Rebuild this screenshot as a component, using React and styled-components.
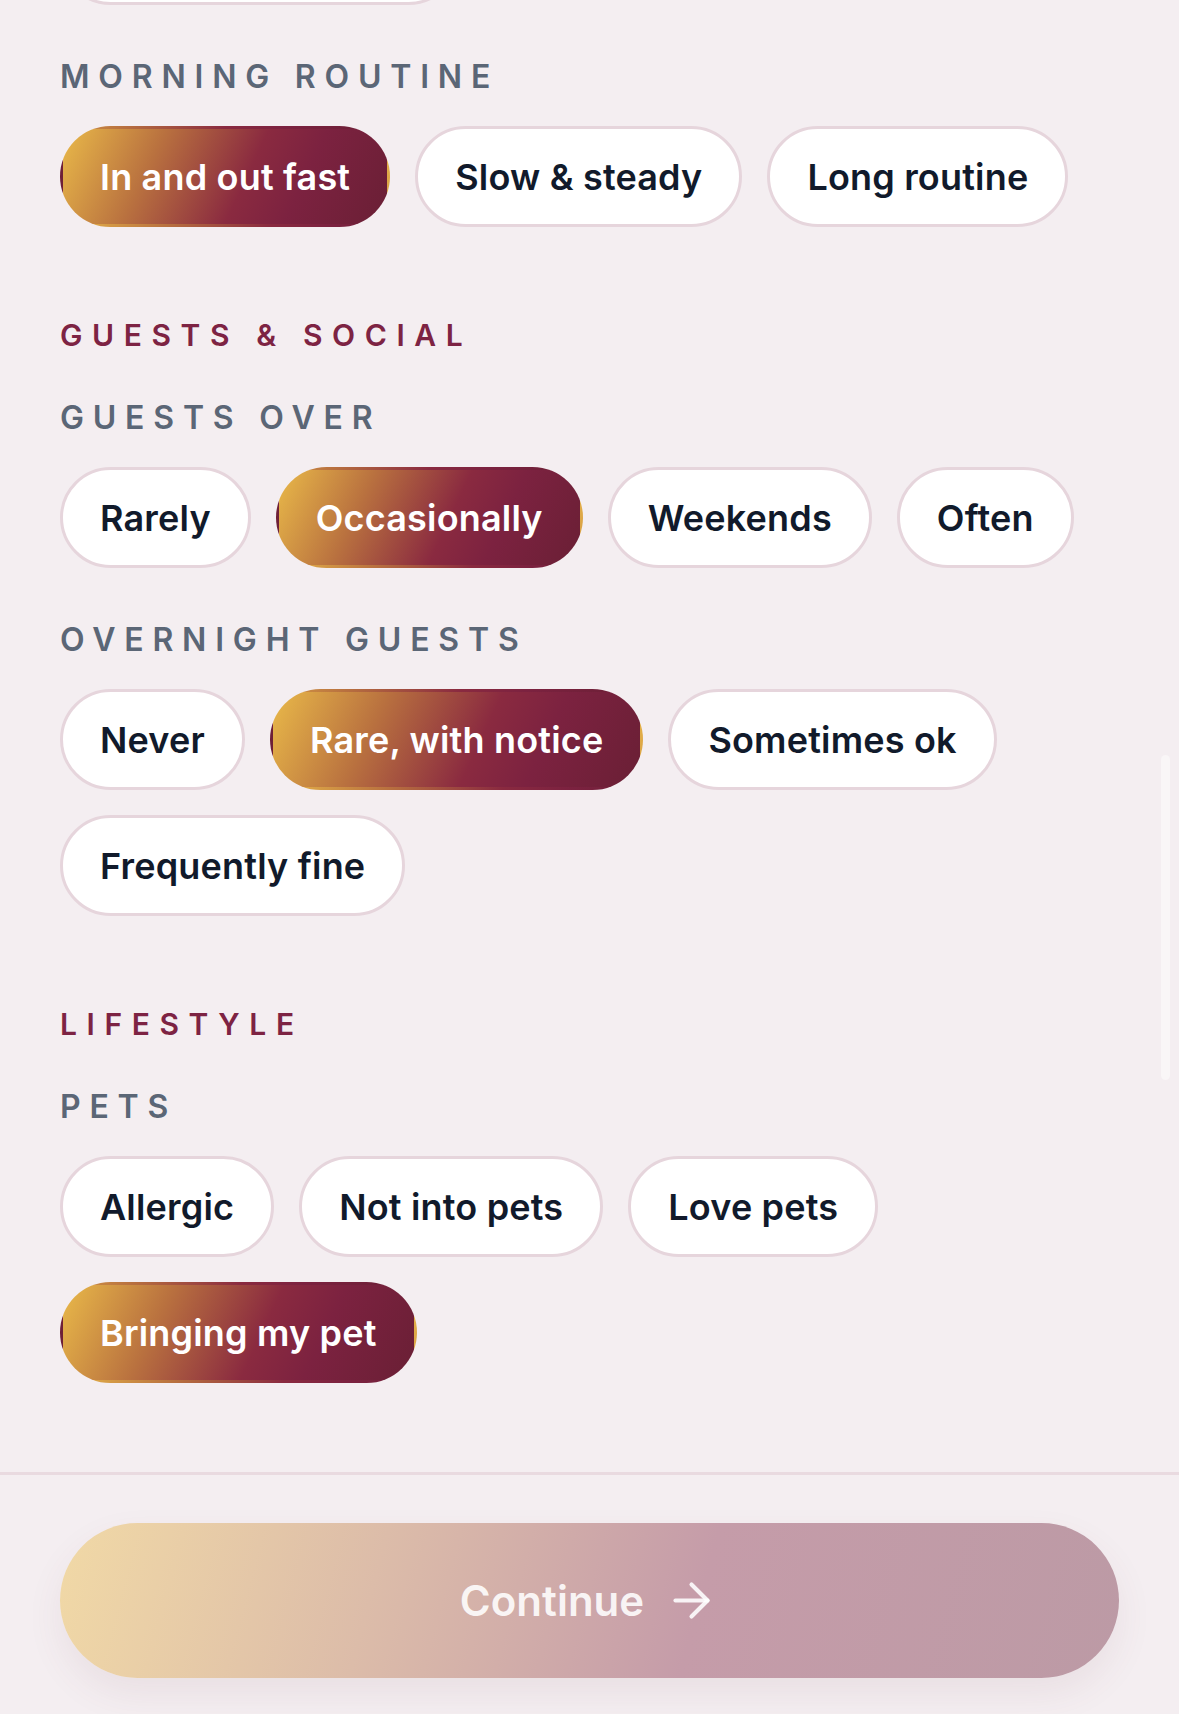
import styled, { createGlobalStyle } from "styled-components";
import { ArrowRight } from "lucide-react";
import { useState } from "react";

const GlobalStyle = createGlobalStyle`
  html, body {
    margin: 0;
    padding: 0;
    background: #f4eef1;
  }
  body {
    font-family: Inter, "Noto Sans", sans-serif;
    -webkit-font-smoothing: antialiased;
  }
  * {
    box-sizing: border-box;
  }
`;

const sections = [
  {
    title: null,
    questions: [
      { id: "bedtime", label: null, options: ["Depends on mood"] },
      {
        id: "morning",
        label: "Morning routine",
        options: ["In and out fast", "Slow & steady", "Long routine"],
      },
    ],
  },
  {
    title: "Guests & social",
    questions: [
      {
        id: "guests",
        label: "Guests over",
        options: ["Rarely", "Occasionally", "Weekends", "Often"],
      },
      {
        id: "overnight",
        label: "Overnight guests",
        options: ["Never", "Rare, with notice", "Sometimes ok", "Frequently fine"],
      },
    ],
  },
  {
    title: "Lifestyle",
    questions: [
      {
        id: "pets",
        label: "Pets",
        options: ["Allergic", "Not into pets", "Love pets", "Bringing my pet"],
      },
    ],
  },
];

export default function App() {
  const [answers, setAnswers] = useState({
    morning: "In and out fast",
    guests: "Occasionally",
    overnight: "Rare, with notice",
    pets: "Bringing my pet",
  });

  const pick = (id, value) => setAnswers({ ...answers, [id]: value });

  return (
    <Page>
      <GlobalStyle />
      <ScrollBody>
        {sections.map((section, i) => (
          <Section key={i}>
            {section.title && <SectionTitle>{section.title}</SectionTitle>}
            <Questions>
              {section.questions.map((q) => (
                <Question key={q.id}>
                  {q.label && <Label>{q.label}</Label>}
                  <PillRow>
                    {q.options.map((option) => (
                      <Pill
                        key={option}
                        $active={answers[q.id] === option}
                        onClick={() => pick(q.id, option)}
                      >
                        {option}
                      </Pill>
                    ))}
                  </PillRow>
                </Question>
              ))}
            </Questions>
          </Section>
        ))}
      </ScrollBody>
      <Footer>
        <ContinueButton disabled>
          Continue
          <ArrowRight size={55} strokeWidth={1.8} />
        </ContinueButton>
      </Footer>
      <ScrollThumb />
    </Page>
  );
}

const Page = styled.div`
  display: flex;
  flex-direction: column;
  min-height: 100vh;
  overflow: hidden;
`;

const ScrollBody = styled.main`
  display: flex;
  flex-direction: column;
  gap: 93px;
  margin-top: -96px;
  padding: 0 60px 89px;
`;

const Section = styled.section`
  display: flex;
  flex-direction: column;
`;

const SectionTitle = styled.h2`
  margin: 0 0 52px;
  font-size: 30px;
  line-height: 30px;
  font-weight: 600;
  letter-spacing: 0.32em;
  text-transform: uppercase;
  color: #7d2343;
`;

const Questions = styled.div`
  display: flex;
  flex-direction: column;
  gap: 56px;
`;

const Question = styled.div`
  display: flex;
  flex-direction: column;
`;

const Label = styled.h3`
  margin: 0 0 33px;
  font-size: 32px;
  line-height: 32px;
  font-weight: 600;
  letter-spacing: 0.275em;
  text-transform: uppercase;
  color: #5b6676;
`;

const PillRow = styled.div`
  display: flex;
  flex-wrap: wrap;
  column-gap: 25px;
  row-gap: 25px;
`;

const Pill = styled.button`
  display: inline-flex;
  align-items: center;
  height: 101px;
  padding: 0 37px;
  border-radius: 999px;
  border: 3px solid ${({ $active }) => ($active ? "transparent" : "#e6d5dc")};
  background: ${({ $active }) =>
    $active
      ? "linear-gradient(115deg, #e9b949 0%, #b9713f 28%, #8a2a40 56%, #7c2240 72%, #6a1f35 100%)"
      : "#ffffff"};
  color: ${({ $active }) => ($active ? "#ffffff" : "#111a2b")};
  font-family: inherit;
  font-size: 36px;
  font-weight: 600;
  letter-spacing: 0.005em;
  white-space: nowrap;
  cursor: pointer;
`;

const Footer = styled.footer`
  border-top: 3px solid #e9dae0;
  padding: 48px 60px 35px;
  background: #f4eef1;
`;

const ContinueButton = styled.button`
  display: flex;
  align-items: center;
  justify-content: center;
  gap: 20px;
  width: 100%;
  height: 155px;
  border: none;
  border-radius: 999px;
  background: linear-gradient(
    105deg,
    #f1d9a6 0%,
    #dcbca9 30%,
    #c59ca9 60%,
    #bc9aa5 100%
  );
  box-shadow: 0 16px 36px rgba(110, 60, 80, 0.08);
  color: rgba(255, 255, 255, 0.88);
  font-family: inherit;
  font-size: 42px;
  font-weight: 600;
  cursor: not-allowed;
`;

const ScrollThumb = styled.div`
  position: fixed;
  top: 755px;
  right: 9px;
  width: 9px;
  height: 325px;
  border-radius: 5px;
  background: rgba(255, 255, 255, 0.45);
`;
